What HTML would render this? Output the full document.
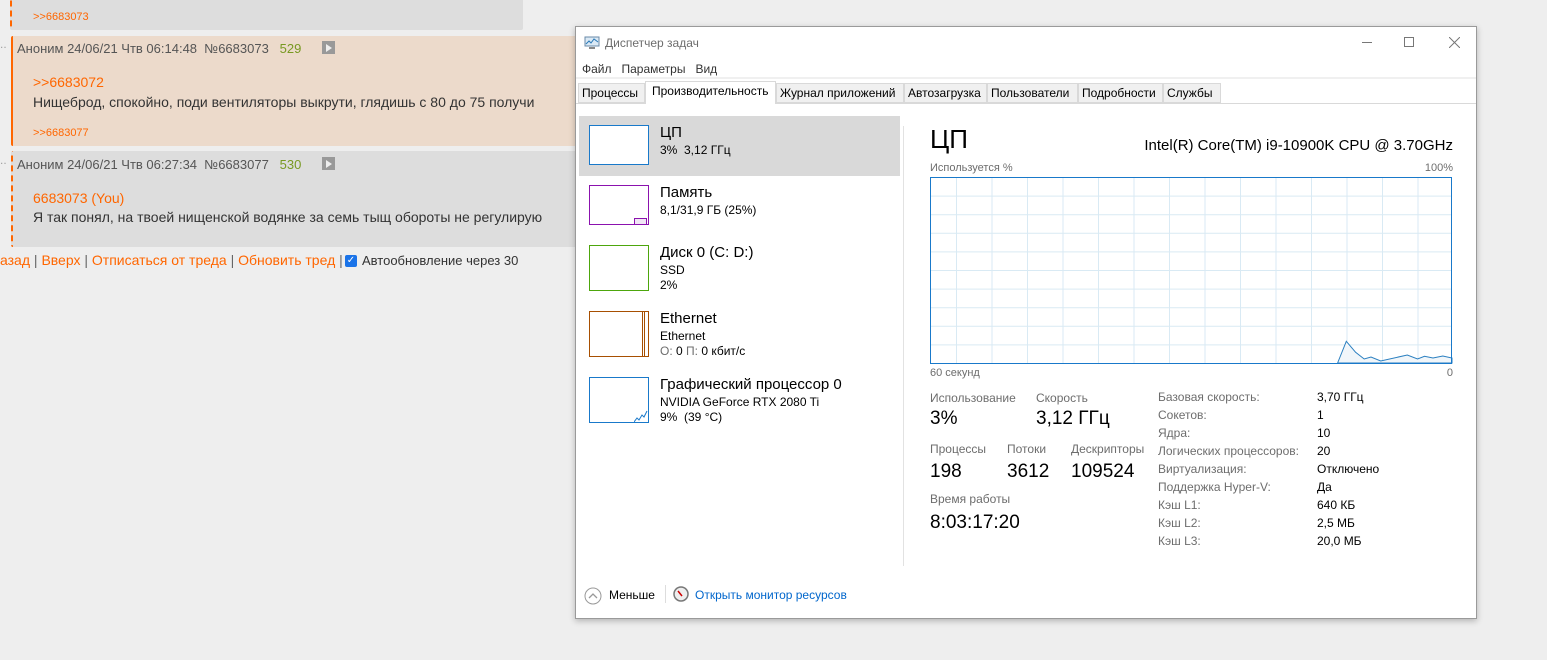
<!DOCTYPE html>
<html><head><meta charset="utf-8"><style>
*{margin:0;padding:0;box-sizing:border-box}
body{width:1547px;height:660px;background:#eeeeee;position:relative;overflow:hidden;font-family:"Liberation Sans","DejaVu Sans",sans-serif;}
.a{position:absolute;white-space:nowrap}
.or{color:#ff6600}
.post{position:absolute;background:#dddddd;border-radius:2px}
.win{position:absolute;left:575px;top:26px;width:902px;height:593px;background:#fff;border:1px solid #9a9a9a;box-shadow:0 2px 6px rgba(0,0,0,.25);font-size:12px;color:#000}
.win .a{font-family:"Liberation Sans","DejaVu Sans",sans-serif}
.tab{position:absolute;top:56px;height:20px;border:1px solid #d9d9d9;background:#f0f0f0;font-size:12px;line-height:18px;padding:0 3px}
.th{position:absolute;width:60px;height:40px;background:#fff}
.g{color:#6d6d6d}
</style></head><body>
<!-- left page -->
<div class="post" style="left:10px;top:-4px;width:513px;height:34px;border-left:2px dashed #ff6600"></div>
<div class="a or" style="left:33px;top:11px;font-size:11px">&gt;&gt;6683073</div>
<div class="a" style="left:0;top:40px;color:#999;font-size:10px">‥</div>
<div class="post" style="left:11px;top:36px;width:570px;height:110px;background:#ecdacb;border-left:2px solid #ff6600"></div>
<div class="a" style="left:17px;top:41px;font-size:13px;color:#555">Аноним 24/06/21 Чтв 06:14:48 &nbsp;№6683073 &nbsp;&nbsp;<span style="color:#789922">529</span></div>
<div class="a" style="left:322px;top:41px;width:13px;height:13px;background:#999"><div style="margin:3px 0 0 4px;width:0;height:0;border-left:6px solid #eee;border-top:4px solid transparent;border-bottom:4px solid transparent"></div></div>
<div class="a or" style="left:33px;top:74px;font-size:14px">&gt;&gt;6683072</div>
<div class="a" style="left:33px;top:94px;font-size:14px;color:#333">Нищеброд, спокойно, поди вентиляторы выкрути, глядишь с 80 до 75 получи</div>
<div class="a or" style="left:33px;top:127px;font-size:11px">&gt;&gt;6683077</div>
<div class="a" style="left:0;top:156px;color:#999;font-size:10px">‥</div>
<div class="post" style="left:11px;top:151px;width:570px;height:96px;border-left:2px dashed #ff6600"></div>
<div class="a" style="left:17px;top:157px;font-size:13px;color:#555">Аноним 24/06/21 Чтв 06:27:34 &nbsp;№6683077 &nbsp;&nbsp;<span style="color:#789922">530</span></div>
<div class="a" style="left:322px;top:157px;width:13px;height:13px;background:#999"><div style="margin:3px 0 0 4px;width:0;height:0;border-left:6px solid #eee;border-top:4px solid transparent;border-bottom:4px solid transparent"></div></div>
<div class="a or" style="left:33px;top:190px;font-size:14px">6683073 (You)</div>
<div class="a" style="left:33px;top:209px;font-size:14px;color:#333">Я так понял, на твоей нищенской водянке за семь тыщ обороты не регулирую</div>
<div class="a" style="left:0;top:252px;font-size:14px;color:#666"><span class="or">азад</span> | <span class="or">Вверх</span> | <span class="or">Отписаться от треда</span> | <span class="or">Обновить тред</span> | </div>
<div class="a" style="left:345px;top:255px;width:12px;height:12px;background:#1a73e8;border-radius:2px;color:#fff;font-size:10px;line-height:12px;text-align:center">✓</div>
<div class="a" style="left:362px;top:253px;font-size:13px;color:#333">Автообновление через 30</div>

<!-- window -->
<div class="win">
<svg class="a" style="left:8px;top:9px" width="16" height="14" viewBox="0 0 16 14"><rect x="1" y="1" width="14" height="9" fill="#dbe9f5" stroke="#6a8aa8"/><polyline points="2,8 5,5 7,7 10,3 14,6" fill="none" stroke="#2a7ab8"/><rect x="5" y="11" width="6" height="2" fill="#888"/></svg>
<div class="a" style="left:29px;top:9px;color:#6d6d6d">Диспетчер задач</div>
<div class="a" style="left:786px;top:15px;width:10px;height:1px;background:#777"></div>
<div class="a" style="left:828px;top:10px;width:10px;height:10px;border:1px solid #777"></div>
<svg class="a" style="left:873px;top:10px" width="11" height="11"><path d="M0 0L11 11M11 0L0 11" stroke="#777"/></svg>
<div class="a" style="left:6px;top:35px;color:#333">Файл &nbsp;&nbsp;Параметры &nbsp;&nbsp;Вид</div>
<div class="a" style="left:0;top:50px;width:900px;height:2px;background:#f0f0f0"></div>
<div class="a" style="left:0;top:76px;width:900px;height:1px;background:#d9d9d9"></div>
<div class="tab" style="left:2px;width:67px">Процессы</div>
<div class="tab" style="left:69px;top:54px;height:23px;width:131px;background:#fff;border-bottom:none;padding-left:6px;line-height:18px">Производительность</div>
<div class="tab" style="left:200px;width:128px">Журнал приложений</div>
<div class="tab" style="left:328px;width:83px">Автозагрузка</div>
<div class="tab" style="left:411px;width:91px">Пользователи</div>
<div class="tab" style="left:502px;width:85px">Подробности</div>
<div class="tab" style="left:587px;width:58px">Службы</div>

<div class="a" style="left:3px;top:89px;width:321px;height:60px;background:#d9d9d9"></div>
<div class="a" style="left:327px;top:99px;width:1px;height:440px;background:#e2e2e2"></div>
<div class="th" style="left:13px;top:98px;border:1px solid #1979ca"></div>
<div class="a" style="left:84px;top:97px;font-size:15px">ЦП</div>
<div class="a" style="left:84px;top:116px">3% &nbsp;3,12 ГГц</div>
<div class="th" style="left:13px;top:158px;border:1px solid #8b12ae"><div style="position:absolute;right:1px;bottom:0;width:13px;height:6px;background:#f1e6f5;border:1px solid #8b12ae;border-bottom:none"></div></div>
<div class="a" style="left:84px;top:157px;font-size:15px">Память</div>
<div class="a" style="left:84px;top:176px">8,1/31,9 ГБ (25%)</div>
<div class="th" style="left:13px;top:218px;border:1px solid #4da60c;height:46px"></div>
<div class="a" style="left:84px;top:217px;font-size:15px">Диск 0 (C: D:)</div>
<div class="a" style="left:84px;top:236px">SSD</div>
<div class="a" style="left:84px;top:251px">2%</div>
<div class="th" style="left:13px;top:284px;border:1px solid #a74f01;height:46px"><div style="position:absolute;right:3px;top:0;width:3px;height:44px;border-left:1px solid #a74f01;border-right:1px solid #a74f01"></div></div>
<div class="a" style="left:84px;top:283px;font-size:15px">Ethernet</div>
<div class="a" style="left:84px;top:302px">Ethernet</div>
<div class="a" style="left:84px;top:317px"><span class="g">О:</span> 0 <span class="g">П:</span> 0 кбит/с</div>
<div class="th" style="left:13px;top:350px;border:1px solid #1979ca;height:46px"><svg style="position:absolute;right:0;bottom:0" width="14" height="14"><polyline points="0,14 3,10 5,12 8,7 10,9 13,3" fill="none" stroke="#1979ca"/></svg></div>
<div class="a" style="left:84px;top:349px;font-size:15px">Графический процессор 0</div>
<div class="a" style="left:84px;top:368px">NVIDIA GeForce RTX 2080 Ti</div>
<div class="a" style="left:84px;top:383px">9% &nbsp;(39 °C)</div>

<div class="a" style="left:354px;top:97px;font-size:26px">ЦП</div>
<div class="a" style="right:23px;top:110px;font-size:15px">Intel(R) Core(TM) i9-10900K CPU @ 3.70GHz</div>
<div class="a g" style="left:354px;top:135px;font-size:11px">Используется %</div>
<div class="a g" style="right:23px;top:135px;font-size:11px">100%</div>
<div class="a g" style="left:354px;top:340px;font-size:11px">60 секунд</div>
<div class="a g" style="right:23px;top:340px;font-size:11px">0</div>
<div class="a g" style="left:354px;top:364px">Использование</div>
<div class="a g" style="left:460px;top:364px">Скорость</div>
<div class="a" style="left:354px;top:381px;font-size:19px">3%</div>
<div class="a" style="left:460px;top:381px;font-size:19px">3,12 ГГц</div>
<div class="a g" style="left:354px;top:415px">Процессы</div>
<div class="a g" style="left:431px;top:415px">Потоки</div>
<div class="a g" style="left:495px;top:415px">Дескрипторы</div>
<div class="a" style="left:354px;top:434px;font-size:19px">198</div>
<div class="a" style="left:431px;top:434px;font-size:19px">3612</div>
<div class="a" style="left:495px;top:434px;font-size:19px">109524</div>
<div class="a g" style="left:354px;top:465px">Время работы</div>
<div class="a" style="left:354px;top:485px;font-size:19px">8:03:17:20</div>
<div class="a g" style="left:582px;top:361px;line-height:18px">Базовая скорость:<br>Сокетов:<br>Ядра:<br>Логических процессоров:<br>Виртуализация:<br>Поддержка Hyper-V:<br>Кэш L1:<br>Кэш L2:<br>Кэш L3:</div>
<div class="a" style="left:741px;top:361px;line-height:18px">3,70 ГГц<br>1<br>10<br>20<br>Отключено<br>Да<br>640 КБ<br>2,5 МБ<br>20,0 МБ</div>

<svg class="a" style="left:8px;top:560px" width="18" height="18"><circle cx="9" cy="9" r="8" fill="#fff" stroke="#999"/><path d="M5 11L9 7L13 11" fill="none" stroke="#999" stroke-width="1.3"/></svg>
<div class="a" style="left:33px;top:561px">Меньше</div>
<div class="a" style="left:89px;top:558px;width:1px;height:18px;background:#ddd"></div>
<svg class="a" style="left:97px;top:559px" width="16" height="16"><circle cx="8" cy="8" r="7" fill="#eee" stroke="#777" stroke-width="1.5"/><path d="M5 5L9 10" stroke="#c00" stroke-width="1.5"/></svg>
<div class="a" style="left:119px;top:561px;color:#0066cc">Открыть монитор ресурсов</div>
</div>

<!-- graph -->
<svg class="a" style="left:930px;top:177px" width="523" height="187" viewBox="930 177 523 187">
<rect x="930.5" y="177.5" width="521" height="186" fill="#fff"/>
<g stroke="#d9eaf4" stroke-width="1">
<path d="M956.5 178V363M992 178V363M1027.5 178V363M1063 178V363M1098.5 178V363M1134 178V363M1169.5 178V363M1205 178V363M1240.5 178V363M1276 178V363M1311.5 178V363M1347 178V363M1382.5 178V363M1418 178V363"/>
<path d="M931 196.1H1451M931 214.7H1451M931 233.3H1451M931 251.9H1451M931 270.5H1451M931 289.1H1451M931 307.7H1451M931 326.3H1451M931 344.9H1451"/>
</g>
<path d="M1337.6 363L1346.3 341.3L1355.6 352.3L1364.2 359L1371 357L1380.7 361L1407.3 355L1417.6 359L1424.5 356.3L1433 358L1442.8 356L1452 358V363Z" fill="#f1f6fa" stroke="#2a7fc0"/>
<rect x="930.5" y="177.5" width="521" height="186" fill="none" stroke="#1979ca"/>
</svg>
</body></html>
